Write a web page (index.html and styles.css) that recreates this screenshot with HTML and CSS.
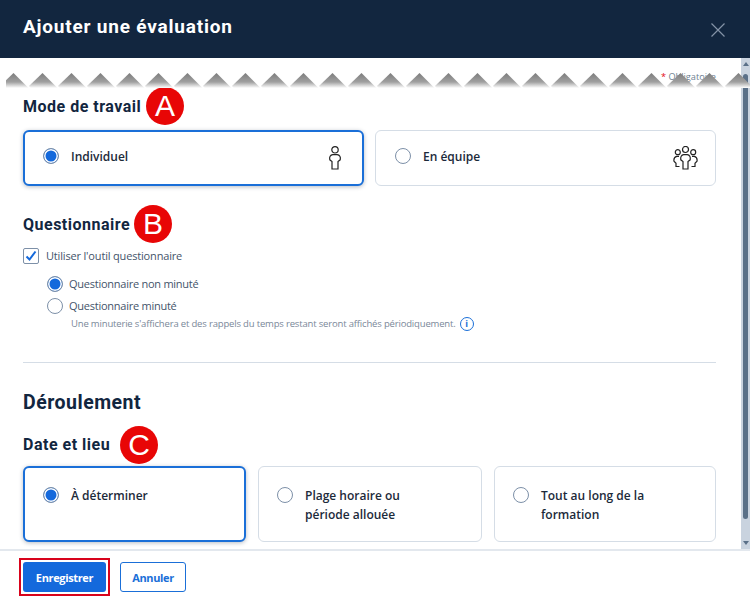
FILE: index.html
```html
<!DOCTYPE html>
<html lang="fr">
<head>
    <meta charset="UTF-8">
    <meta name="viewport" content="width=device-width, initial-scale=1.0">
    <title>Ajouter une évaluation</title>
    <link rel="stylesheet" href="styles.css">
</head>
<body>

<div class="modal">
    <header class="modal-header">
        <h1>Ajouter une évaluation</h1>
        <svg class="close-icon" width="16" height="16" viewBox="0 0 16 16"><path d="M1.5 1.5l13 13M14.5 1.5l-13 13"/></svg>
    </header>

    <div class="modal-main">
        <div class="modal-body">
            <div class="required"><span class="star">*</span> Obligatoire</div>

            <!-- Mode de travail -->
            <h3 class="section-title title-mode">Mode de travail <span class="badge badge-a">A</span></h3>
            <div class="cards cards-two">
                <div class="card selected">
                    <span class="radio checked"></span>
                    <span class="card-label">Individuel</span>
                    <svg class="card-icon icon-person" width="14" height="24" viewBox="0 0 14 24"><circle cx="7" cy="3.8" r="3.2"/><path d="M4 23V15.500L1.800 13.800c-.7-2.800.6-4.800 3-5.100h4.400c2.400.3 3.700 2.300 3 5.100L10 15.500V23z"/></svg>
                </div>
                <div class="card">
                    <span class="radio"></span>
                    <span class="card-label">En équipe</span>
                    <svg class="card-icon icon-team" width="25" height="24" viewBox="0 0 25 24"><circle cx="12.500" cy="3.500" r="3"/><circle cx="4.800" cy="6.200" r="2.500"/><circle cx="20.200" cy="6.200" r="2.500"/><path d="M10 23V15.500L7.800 13.800c-.5-3 .6-4.800 2.900-5.100h3.600c2.300.3 3.400 2.100 2.900 5.100L15 15.500V23z"/><path d="M6 10.300H3.800C1.500 10.800.6 12.800 1 15.300l2 1.900v3.300h3.500M19 10.300h2.200c2.300.5 3.200 2.500 2.800 5l-2 1.900v3.300h-3.500"/></svg>
                </div>
            </div>

            <!-- Questionnaire -->
            <h3 class="section-title title-quiz">Questionnaire <span class="badge badge-b">B</span></h3>
            <div class="check-row">
                <span class="checkbox"><svg width="12" height="12" viewBox="0 0 12 12"><path d="M1.500 6.500l3 3 6-8"/></svg></span>
                Utiliser l'outil questionnaire
            </div>
            <div class="quiz-options">
                <div class="option"><span class="radio checked"></span> Questionnaire non minuté</div>
                <div class="option"><span class="radio"></span> Questionnaire minuté</div>
                <div class="hint">
                    Une minuterie s'affichera et des rappels du temps restant seront affichés périodiquement.
                    <span class="info">i</span>
                </div>
            </div>

            <hr class="divider">

            <!-- Déroulement -->
            <h2 class="big-title">Déroulement</h2>
            <h3 class="section-title title-date">Date et lieu <span class="badge badge-c">C</span></h3>
            <div class="cards cards-three">
                <div class="card selected">
                    <span class="radio checked"></span>
                    <span class="card-label">À déterminer</span>
                </div>
                <div class="card">
                    <span class="radio"></span>
                    <span class="card-label">Plage horaire ou<br>période allouée</span>
                </div>
                <div class="card">
                    <span class="radio"></span>
                    <span class="card-label">Tout au long de la<br>formation</span>
                </div>
            </div>
        </div>

        <div class="scrollbar">
            <span class="arrow-up"></span>
            <span class="thumb"></span>
            <span class="arrow-down"></span>
        </div>

        <!-- Bord déchiré de la capture -->
        <svg class="torn-edge" width="750" height="16">
            <defs>
                <linearGradient id="torn" x1="0" y1="0" x2="0" y2="1">
                    <stop offset="0" stop-color="#7c7c7c"/>
                    <stop offset="0.6" stop-color="#a0a0a0"/>
                    <stop offset="1" stop-color="#ffffff"/>
                </linearGradient>
                <pattern id="teeth" width="29" height="16" patternUnits="userSpaceOnUse">
                    <path d="M13.500 0L28.500 15H1.500L0 13z" fill="url(#torn)"/>
                </pattern>
            </defs>
            <rect x="6" width="744" height="16" fill="url(#teeth)"/>
        </svg>
    </div>

    <footer class="modal-footer">
        <span class="highlight"><button class="btn btn-primary">Enregistrer</button></span>
        <button class="btn btn-secondary">Annuler</button>
    </footer>
</div>

</body>
</html>
```

FILE: styles.css
```css
* {
    box-sizing: border-box;
}

body {
    margin: 0;
    background-color: #fff;
    font-family: "Open Sans", "Noto Sans", sans-serif;
    color: #12263f;
}

.modal {
    width: 750px;
    height: 606px;
    display: flex;
    flex-direction: column;
    overflow: hidden;
}

.modal-header {
    height: 58px;
    flex: none;
    background-color: #12263f;
    display: flex;
    align-items: center;
    justify-content: space-between;
    padding: 0 24px 6px 23px;
}

.modal-header h1 {
    margin: 0;
    color: #fff;
    font-family: Roboto, sans-serif;
    font-size: 19px;
    font-weight: 700;
    letter-spacing: 0.8px;
}

.close-icon path {
    fill: none;
    stroke: #8492a6;
    stroke-width: 1.2;
}

.close-icon {
    margin-top: 8px;
}

.modal-main {
    flex: 1;
    min-height: 0;
    display: flex;
    position: relative;
}

.modal-body {
    flex: 1;
    min-width: 0;
    overflow: hidden;
    padding: 12px 25px 0 23px;
}

.required {
    text-align: right;
    font-size: 9.200px;
    line-height: 14px;
    color: #6e7f92;
}

.star {
    color: #e30613;
}

.section-title {
    position: relative;
    margin: 0;
    font-family: Roboto, sans-serif;
    font-size: 16px;
    font-weight: 700;
    letter-spacing: 0.5px;
    line-height: 20px;
}

.title-mode {
    margin-top: 13px;
}

.title-quiz {
    margin-top: 29px;
}

.title-date {
    margin-top: 20px;
}

.badge {
    position: absolute;
    top: -10px;
    width: 38px;
    height: 38px;
    border-radius: 50%;
    background-color: #e80606;
    color: #fff;
    font-family: "Liberation Sans", Arial, sans-serif;
    font-size: 30px;
    font-weight: 400;
    letter-spacing: 0;
    line-height: 38px;
    text-align: center;
}

.badge-a {
    left: 123px;
}

.badge-b {
    left: 111px;
}

.badge-c {
    left: 97px;
    top: -9px;
}

.cards {
    display: grid;
    margin-top: 13px;
}

.cards-two {
    grid-template-columns: 341px 341px;
    gap: 11px;
}

.cards-three {
    grid-template-columns: 223px 224px 222px;
    gap: 12px;
    margin-top: 11px;
}

.card {
    display: flex;
    align-items: flex-start;
    gap: 12px;
    border: 1px solid #d5dde6;
    border-radius: 6px;
    padding: 20px 17px 0 18px;
    height: 56px;
    background-color: #fff;
}

.cards-two .card {
    padding: 17px 17px 0 19px;
}

.cards-three .card {
    height: 76px;
}

.card.selected,
.cards-two .card.selected {
    border: 2px solid #1a6fd8;
    padding: 19px 20px 0 18px;
    box-shadow: 0 1px 4px rgba(18, 38, 63, 0.3);
}

.cards-two .card.selected {
    padding-top: 16px;
}

.card-label {
    font-size: 12px;
    font-weight: 600;
    line-height: 19px;
    margin-top: -1px;
    color: #1c2a3a;
}

.card-icon {
    margin-left: auto;
    margin-top: -2px;
}

.card-icon circle,
.card-icon path {
    fill: none;
    stroke: #222;
    stroke-width: 1.200;
}

.radio {
    flex: none;
    display: inline-block;
    width: 16px;
    height: 16px;
    border-radius: 50%;
    border: 1.500px solid #7d90a8;
    background-color: #fff;
}

.radio.checked {
    background-color: #1469dc;
    box-shadow: inset 0 0 0 1.500px #fff;
}

.check-row {
    display: flex;
    align-items: center;
    gap: 7px;
    margin-top: 13px;
    font-size: 11px;
    letter-spacing: -0.170px;
    line-height: 16px;
    color: #44546a;
}

.checkbox {
    width: 16px;
    height: 16px;
    border: 1.500px solid #7d90a8;
    border-radius: 2px;
    display: flex;
    align-items: center;
    justify-content: center;
}

.checkbox path {
    fill: none;
    stroke: #1469dc;
    stroke-width: 2;
}

.quiz-options {
    margin-top: 12px;
    padding-left: 24px;
}

.option {
    display: flex;
    align-items: center;
    gap: 6px;
    font-size: 11px;
    letter-spacing: -0.250px;
    line-height: 16px;
    color: #44546a;
    margin-bottom: 6px;
}

.hint {
    display: flex;
    align-items: center;
    gap: 4px;
    margin-top: -4px;
    padding-left: 24px;
    font-size: 9.500px;
    letter-spacing: -0.170px;
    line-height: 16px;
    color: #7a8899;
    white-space: nowrap;
}

.info {
    width: 14px;
    height: 14px;
    border: 1.500px solid #1a6fd8;
    border-radius: 50%;
    color: #1a6fd8;
    font-size: 9px;
    font-weight: 700;
    line-height: 11px;
    text-align: center;
}

.divider {
    border: none;
    border-top: 1px solid #d5dde6;
    margin: 30px 0 0;
}

.big-title {
    margin: 28px 0 0;
    font-family: Roboto, sans-serif;
    font-size: 19.500px;
    font-weight: 700;
    letter-spacing: 0.5px;
    line-height: 24px;
}

.scrollbar {
    flex: none;
    width: 9px;
    background-color: #c9d3df;
    display: flex;
    flex-direction: column;
    align-items: center;
    padding: 4px 0 4px;
}

.thumb {
    width: 5px;
    flex: 1;
    margin: 8px 0 22px;
    background-color: #5a7088;
    border-radius: 3px;
}

.arrow-up {
    width: 0;
    height: 0;
    border: 3.500px solid transparent;
    border-top: none;
    border-bottom: 4px solid #5a7088;
}

.arrow-down {
    width: 0;
    height: 0;
    border: 3.500px solid transparent;
    border-bottom: none;
    border-top: 4px solid #5a7088;
}

.torn-edge {
    position: absolute;
    left: 0;
    top: 15px;
}

.modal-footer {
    height: 57px;
    flex: none;
    border-top: 2px solid #e3e8ee;
    display: flex;
    align-items: center;
    gap: 10px;
    padding: 0 0 3px 19px;
}

.highlight {
    display: flex;
    border: 2px solid #d8031c;
    padding: 2px;
    height: 38px;
}

.btn {
    height: 30px;
    border-radius: 3px;
    font-family: "Open Sans", sans-serif;
    font-size: 11px;
    font-weight: 700;
    letter-spacing: -0.350px;
    cursor: pointer;
}

.btn-primary {
    width: 83px;
    border: none;
    background-color: #1469dc;
    color: #fff;
}

.btn-secondary {
    width: 66px;
    border: 1px solid #1a6fd8;
    background-color: #fff;
    color: #1a6fd8;
}
```
